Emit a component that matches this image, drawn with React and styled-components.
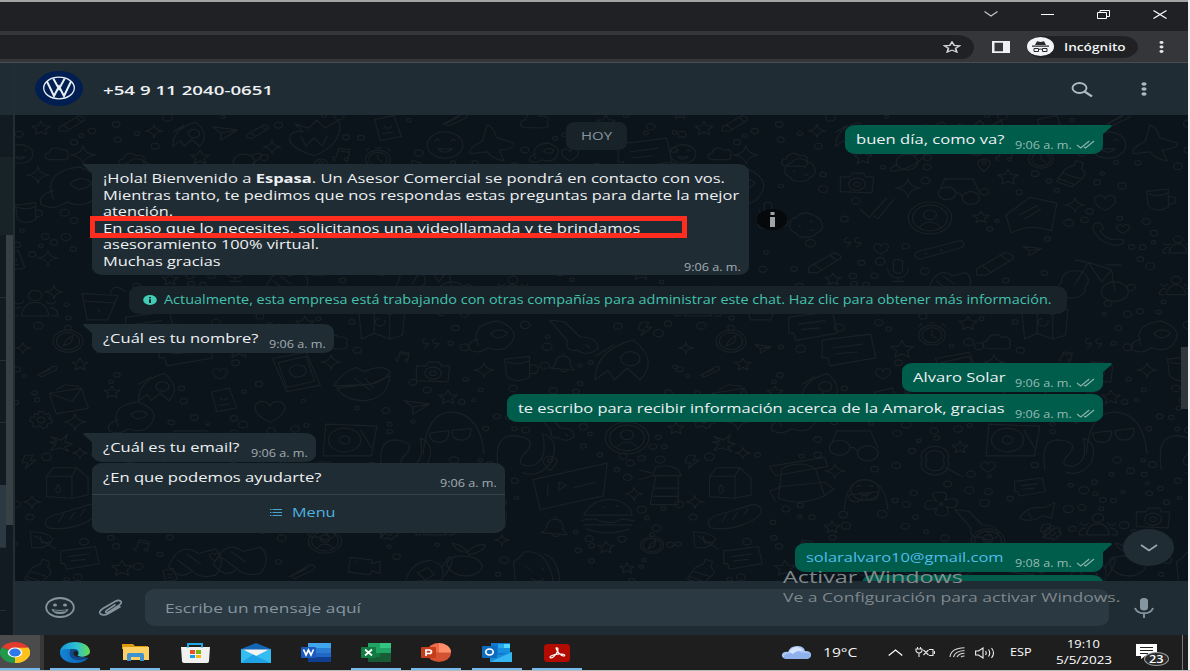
import React, { useLayoutEffect, useRef, useState } from "react";
import styled, { createGlobalStyle } from "styled-components";

const Global = createGlobalStyle`
  * { box-sizing: border-box; }
  html, body { margin: 0; padding: 0; overflow: hidden; background: #f1f1f1; }
  body { font-family: "Open Sans", "Noto Sans", "Liberation Sans", sans-serif; }
`;

/* ---------- text stretched to a measured width ---------- */
const FitBox = styled.span`
  display: inline-block;
  flex: none;
  white-space: nowrap;
  width: ${(p) => p.$w}px;
  font-size: ${(p) => p.$size}px;
  line-height: ${(p) => p.$lh}px;
  height: ${(p) => p.$lh}px;
  color: ${(p) => p.$color};
  font-weight: ${(p) => p.$weight};
`;
const FitInner = styled.span`
  display: inline-block;
  transform-origin: 0 50%;
`;
function Fit({ w, size = 12.8, lh = 16.5, color = "#eef1f3", weight = 400, children }) {
  const ref = useRef(null);
  const [k, setK] = useState(1);
  useLayoutEffect(() => {
    const natural = ref.current.offsetWidth;
    if (natural) setK(w / natural);
  }, [w]);
  return (
    <FitBox $w={w} $size={size} $lh={lh} $color={color} $weight={weight}>
      <FitInner ref={ref} style={{ transform: `scaleX(${k})` }}>{children}</FitInner>
    </FitBox>
  );
}

const Drawing = styled.svg`
  display: block;
  flex: none;
`;
function Icon({ w, h, box = "0 0 24 24", children, ...rest }) {
  return (
    <Drawing width={w} height={h} viewBox={box} preserveAspectRatio="none" fill="none" {...rest}>
      {children}
    </Drawing>
  );
}

/* ---------- wallpaper ---------- */
const shapes = {
  star: "M0-9L2.6-3 9-2.4 4.2 2 5.6 8.6 0 5.2-5.6 8.6-4.2 2-9-2.4-2.6-3Z",
  spark: "M0-10Q1-1 10 0Q1 1 0 10Q-1 1-10 0Q-1-1 0-10Z",
  heart: "M0 8C-12 0-9-8-4-8C-1-8 0-5 0-4C0-5 1-8 4-8C9-8 12 0 0 8Z",
  cloud: "M-6 6C-11 5-10-1-6-1C-6-7 1-8 3-4C7-6 10-2 8 1C10 5 7 7 4 6Z",
  camera: "M-10-5L-4-5-3-8 4-8 5-5 10-5 9 8-10 7ZM5 1A5 5 0 1 1-5 1A5 5 0 1 1 5 1M2 1A2 2 0 1 1-2 1A2 2 0 1 1 2 1",
  rocket: "M-9 8Q-9-5 3-9Q11 0 5 8L1 3-3 8-5 4ZM-9-2L-3-7M5-1A3 3 0 1 1-1-1A3 3 0 1 1 5-1",
  pencil: "M-9 4L5-7Q9-6 9-3L-4 8-9 8ZM-6 2L-2 6M3-5L7-1",
  clip: "M-8 5L5-5Q9-5 7-1L-4 6Q-7 6-5 3L3-2",
  heartBig: "M0 9C-14 3-9-5-4-3L-7-7-2-5 1-9 4-5 9-9C11-3 8 5 0 9M-5-1L-3 4 0 0 3 4 5-1",
  face: "M10 0A10 10 0 1 1-10 0A10 10 0 1 1 10 0M-4 3Q0 8 4 3ZM-6-3Q-4-6-3-3M3-3Q5-6 6-3",
  avatar: "M10 0A10 10 0 1 1-10 0A10 10 0 1 1 10 0M8 0A8 8 0 1 1-8 0A8 8 0 1 1 8 0M3-2A3 3 0 1 1-3-2A3 3 0 1 1 3-2M-5 6Q0-1 5 6",
  starfish: "M-2-10Q0-10 2-3L9 0Q10 3 3 4L5 10Q0 9-2 5L-9 6Q-10 3-4-1Z",
  bubble: "M-10-5L8-8 10 4-7 8-8 4-10 4ZM-6-1L5-3M-5 2L3 1",
  quote: "M-6-5A3 3 0 1 0-4 0Q-4 4-8 6M3-5A3 3 0 1 0 5 0Q5 4 1 6",
  watch: "M8 1A8 8 0 1 1-8 1A8 8 0 1 1 8 1M6 1A6 6 0 1 1-6 1A6 6 0 1 1 6 1M0-3L0 1 3 4M-2-9L2-9M-8-6L-6-9M8-6L6-9",
  compass: "M9 1A9 9 0 1 1-9 1A9 9 0 1 1 9 1M7 1A7 7 0 1 1-7 1A7 7 0 1 1 7 1M3-4L-1 0-3 5 2 2ZM2-10A2 2 0 1 1-2-10A2 2 0 1 1 2-10",
  note: "M-5 6A3 2 0 1 1-5 2L-3-8 7-6 5 7A3 2 0 1 1 5 3M-3-5L6-3",
  planet: "M6 0A6 6 0 1 1-6 0A6 6 0 1 1 6 0M-6 2Q-12 7-7 7Q4 5 10-5Q9-8 4-5",
  pin: "M0 9Q-7 0-6-4Q0-12 6-4Q7 0 0 9M2-3A2 2 0 1 1-2-3A2 2 0 1 1 2-3",
  bottle: "M3-9L7-7 6-3Q9 0 7 3L1 10-7 6-3-2Q0-5 2-5ZM-4 0L5 4M-6 4L2 8",
  glasses: "M-2 2A4 4 0 1 1-10 2A4 4 0 1 1-2 2M9 5A4 4 0 1 1 1 5A4 4 0 1 1 9 5M-2 2Q0 1 1 4M-9-1L-7-7 6-7 9 2",
  mug: "M-8-7L5-9 5 6Q-2 11-7 5ZM5-3Q11-3 9 2Q8 4 5 3M-7-5Q0-2 5-6",
  cookie: "M9 0Q10 4 6 6Q4 10 0 9Q-4 10-6 6Q-10 3-9 0Q-9-5-5-6Q-3-10 1-9Q4-8 6-6Q9-4 9 0M-4 0L-3 2M2-3L4-2M2 4L5 4",
  check: "M-10 1L-5 7 5-8M-3 6L0 8 9-7",
  cap: "M-9 0L0-9 10-6 8 8Q0 4-7 9ZM-4 0L3-5M-2 2L4-3",
  phone: "M-8-8Q-4-10-3-4L-5-2Q-1 5 3 4Q9 3 8 7Q4 11-4 5Q-11-3-8-8",
  mic: "M-3-8Q0-11 3-8L3 1Q0 5-3 1ZM-7-2Q-6 7 0 7Q6 7 7-2M0 7L0 10M-4 10L4 10",
  pill: "M-9 2L8-4Q11-2 8 0L-8 6Q-11 4-9 2M-6 3L-5 3M0 1L1 1",
  plane: "M-9-5L9-2-3 8-3 1ZM-3 1L9-2",
  bike: "M-3 4A4 4 0 1 1-10 2A4 4 0 1 1-3 4M10 6A4 4 0 1 1 2 6A4 4 0 1 1 10 6M-6 3L-2-6 5-3 6 6M-2-6L-6-7M-2-6L2 2 5-3M3-5L8-5",
  people: "M3-5A3 3 0 1 1-3-5A3 3 0 1 1 3-5M-6 7Q-5-1 0-1Q5-1 6 7ZM-5-2A2 2 0 1 1-9-2M9-2A2 2 0 1 1 5-2M-7 7L-10 7Q-10 2-6 2M7 7L10 7Q10 2 6 2",
  hands: "M-9 3Q-5-9 1-3L7-5Q11 0 7 7Q2 9-1 5Q-5 10-9 3M-3-3L2 2M-6 0L-1 5",
  drink: "M-7-5L7-4 3 9-5 9ZM-6-1L6 0M4-5Q5-11 10-6M-1 3L0 5",
  map: "M-9-6L-3-8 3-5 9-8 8 6 3 8-3 5-8 8ZM-3-8L-3 5M3-5L3 8M1-2A2 2 0 1 1-1-3",
  hat: "M-6 5Q-10-7 2-9Q12-4 7 4Q4 9-2 6Q-6 10-10 7Q-11 3-6 1M-1-2Q3-6 6-2Q2 3-1-2",
  bell: "M-9 5Q-5 3-5-3Q-2-9 3-6Q6-2 5 2L8 7ZM-2 7Q1 10 3 7M0-8L1-10",
  guitar: "M-10-9L-4-8 2 0Q9 0 9 6Q5 11 1 7Q-4 8-3 2L-8-6ZM4 4L6 6",
  bolt: "M-4-9L4-9 1-2 7-3-4 9-1 1-7 1Z",
  tablet: "M-8-7L4-10 9 6-3 9ZM-6-5L4-8 7 4-3 7ZM4-1A3 3 0 1 1-2-1A3 3 0 1 1 4-1",
  lips: "M-10 2Q-7-5-2-7L1-5Q7-9 10-5Q8 0 3 1ZM-9 3L3 1 10-3Q9 8 1 9Q-6 9-9 3M-3-2L3 4M1-2L4 3",
  card: "M-7-6L3-9 7 6-4 9ZM2-2A2 2 0 1 1-2-2M-3 4L3 3",
  deck: "M-9-8L10-7 8 8-10 8ZM4 0A6 6 0 1 1-8 0A6 6 0 1 1 4 0M0 0A2 2 0 1 1-4 0A2 2 0 1 1 0 0M4-5L8 4",
  ghost: "M-9 9Q-8-9 0-9Q9-8 10 9M-7 0L-1-1Q-1 4-4 4Q-7 4-7 0M0-1L6-2Q6 3 3 3Q0 3 0-1",
  snake: "M-9 8Q-11-8-4-8Q5-7 0 0Q-4 6 2 6Q8 4 6-9Q12-6 9 4Q5 12-1 9",
  letter: "M-9-4L5-7 8 5-6 8ZM-9-4L1 1 5-7M-6-6L-2-9 4-8",
  leaf: "M-9-8L-8 7Q3 10 7-1Q3-8-9-8M-6-4L9 9M-2-4L-1 3 5 2",
  gear: "M-2-9L2-9 3-6 6-7 8-4 6-2 9 0 8 4 5 4 5 7 1 9-1 6-4 8-7 6-6 3-9 1-8-3-5-3-5-7-2-6ZM3 0A3 3 0 1 1-3 0A3 3 0 1 1 3 0",
  burst: "M-8-7L0-3 5-9 3-1 9 1 3 4 6 9-1 5-8 8-4 1-9-1-3-2Z",
  wave: "M-10-2L10-8 9 4-8 9ZM-6 0L-6 4M-3-1L-1 0-3 2ZM1 1L7-1",
  tower: "M-4-9Q0-11 4-8L5-5-5-5ZM-4-5L-6 9 4 9 4-5M-5 1L4 1M-5 5L4 5M-5-6L-10-8M-10-3L-5-5",
  milk: "M-8-4L-5-9 5-9 10-3 10 7 3 9-8 8ZM-8-4L3-4 3 9M3-4L5-9M-3 1Q-5 5-3 6Q-1 5-3 1",
  pack: "M-6-5Q0-9 5-5L8 7Q0 12-7 8ZM-10-6L8-10 9-6-8-2ZM-7 3L8 1M-6 3L-10 5-8 9M8 1L11 4 8 7",
  bread: "M-9 6Q-12 1-5-1L7-6Q12-4 8 1Q0 8-9 6M-5 3L-3-1M-1 2L1-2M3 0L5-4",
  burger: "M-9-1Q-6-9 1-9Q8-8 9-1ZM-10 2Q-6 0-3 2Q2 4 5 1L10 2M-9 4L9 4M-8 6Q0 10 8 6M-2-5L-1-5M3-6L4-5",
  lens: "M2-2A6 6 0 1 1-9-2A6 6 0 1 1 2-2M0-2A4 4 0 1 1-7-2A4 4 0 1 1 0-2M1 2L9 8",
  flower: "M-2-2Q-8-10 0-9Q5-9 2-3Q10-6 9 0Q8 4 3 2Q6 10 0 9Q-5 8-2 3Q-10 6-9 0Q-8-4-2-2M1 0A1 1 0 1 1-1 0A1 1 0 1 1 1 0",
  fish: "M-10 4Q-5-6 4-4L10-8 8 4 3 2Q-3 8-10 4M-5 0L-3 4",
  cherry: "M-1-2Q-9-3-9 3Q-6 10 1 8Q8 4 2-1ZM0-2Q-2-8-7-9Q-5-4-1-4Q2-9 6-8Q6-5 0-3",
  turtle: "M-8 6Q-6-5 2-6Q9-4 7 5ZM-8 6L-10 8M7-2L10-8Q13-7 8 3M-3 1L1-2 4 2 0 5Z",
  pop: "M-7 10L-8-4Q-5-6-4-9Q6-11 8 10M-3-1L-1 1M3-1L4 1M-1 5Q2 8 4 5M4-8Q10-5 10 8",
  video: "M-9-7L4-5 4-2 9-4 9 6 4 4 3 7-10 5ZM-6-4L-5-3",
};

const doodles = [
  ["star",41,128,.8],["pencil",72,123,1.1],["spark",154,131,.7],["rocket",190,135,1.5],["plane",225,132,1.1],["pencil",258,131,.95],["heartBig",314,138,2.1],["spark",272,147,.7],
  ["note",342,155,.9],["watch",378,158,1.2],["star",200,157,.8],["cloud",57,154,1],["spark",83,155,1],["spark",38,175,.9],["hat",73,188,2.5],["cloud",132,160,1.1],
  ["card",388,128,1.5],["face",445,145,1.4],["starfish",492,143,1.9],["clip",455,119,1.2],["cloud",535,121,1.2],["bubble",645,154,2.1],["hat",545,153,1.2],["star",680,113,.7],["star",606,122,.8],["spark",555,183,1.1],["heart",570,155,.8],
  ["planet",244,162,1.4],["camera",194,183,1.3],["pin",321,165,.8],["star",345,177,.9],["bottle",407,173,1.5],["glasses",297,190,1.7],["cookie",137,170,1.3],["spark",245,188,1],
  ["avatar",267,218,1.7],["cookie",143,225,1.4],["check",215,208,1.4],["spark",412,205,.8],["star",318,217,.7],["cap",367,215,2.1],["heart",442,203,1],["mug",497,200,1.3],["phone",446,234,1.4],["heart",460,229,.6],
  ["people",515,245,1.2],["cloud",564,257,1.3],["star",641,273,.8],["lens",603,255,1.3],["leaf",657,225,1.3],["face",20,154,1],["mug",28,213,1.2],["mic",105,211,1],["spark",48,258,.8],["card",14,261,1.2],
  ["quote",192,242,.9],["heart",218,249,.7],["pencil",162,262,1.4],["mic",235,270,1.2],["pill",277,248,2],["pencil",332,263,1.6],["plane",369,250,.8],["bike",432,277,2.6],["hands",287,281,1.8],["star",170,279,.7],["people",513,286,1.3],
  ["drink",100,303,2],["people",35,304,1.8],["compass",68,340,1.3],["spark",23,348,.6],["spark",54,292,.7],["map",382,324,2],["hat",493,337,1.9],["star",305,323,.8],["watch",269,334,1.3],["bubble",150,326,1.9],["bubble",186,350,2.1],
  ["cloud",334,342,1.2],["quote",433,343,.9],["star",239,349,1],["camera",433,372,1.3],["spark",484,370,.8],["mug",520,369,1.5],["bell",563,363,1.1],["guitar",575,337,2],["rocket",624,361,2.5],["bolt",645,329,.8],["plane",100,348,.7],
  ["tablet",295,373,2.2],["lips",362,382,2.2],["spark",331,362,.8],["note",403,357,.7],["heart",220,374,.7],["card",224,400,1.4],["heart",270,412,1.4],["star",448,397,.8],["plane",417,406,1.1],["deck",350,440,2.1],["ghost",452,433,2.5],
  ["snake",525,453,2.3],["snake",405,455,2],["pin",550,463,.9],["star",80,364,.7],["clip",47,371,1],["letter",70,400,1.8],["star",112,392,.7],["rocket",158,388,1.7],["hat",133,418,1.9],["gear",41,420,1],["spark",75,422,.9],["guitar",557,428,1.5],
  ["avatar",627,438,1.7],["star",676,428,.7],["burst",61,443,1],["spark",80,453,.6],["wave",570,485,2.9],["tower",667,486,2.2],["spark",634,494,.7],["milk",65,483,1.8],["pack",137,480,2.4],["bread",72,516,2.1],["spark",32,502,.7],
  ["burger",608,517,2.1],["bell",555,527,1.2],["glasses",192,444,2],["spark",172,471,.8],["ghost",202,495,1.8],["face",202,490,1.1],["lens",280,464,1.8],["star",297,447,.7],["heart",325,467,.7],["flower",278,504,1.4],
  ["bubble",367,487,1.2],["fish",374,513,1.4],["guitar",315,525,1.8],["gear",389,533,.8],["people",435,525,1.5],["camera",490,518,1.3],["star",169,527,.7],["leaf",43,540,1.1],["bubble",80,558,1.5],["star",122,568,.9],
  ["compass",652,544,1],["star",606,547,.7],["cherry",470,560,2],["turtle",425,571,1.9],["pop",534,569,2],["star",627,568,.6],["hands",195,560,2.3],["hands",240,558,2.3],["heart",215,557,.5],["spark",502,540,.6],["bottle",37,571,1.4],
  ["video",365,566,1.3],["avatar",325,541,1.3],["clip",302,571,1.3],["note",142,546,.8],["bolt",384,531,.8],["card",170,575,.8],["bolt",29,462,.8],
];

const dots = [];
let seed = 7;
const rnd = () => (seed = (seed * 16807) % 2147483647) / 2147483647;
for (let i = 0; i < 2600 && dots.length < 330; i++) {
  const x = 15 + rnd() * 663, y = 115 + rnd() * 466, r = 1.5 + rnd() * 2.2;
  const free = doodles.every(([, a, b, s]) => Math.abs(a - x) > s * 12 + 3 || Math.abs(b - y) > s * 8.5 + 3);
  if (free && dots.every((d) => Math.hypot((d[0] - x) / 1.4, d[1] - y) > 7)) dots.push([x, y, r]);
}

const Wallpaper = styled.svg`
  position: absolute;
  inset: 0;
  width: 100%;
  height: 100%;
`;
function Doodles() {
  return (
    <Wallpaper viewBox="15 115 1173 466" preserveAspectRatio="none" fill="none" stroke="#192127" strokeWidth="1.2" strokeLinejoin="round">
      {[0, 663].map((dx) => (
        <g key={dx} transform={`translate(${dx} 0)`}>
          {doodles.map(([n, x, y, s], i) => (
            <path key={i} d={shapes[n]} transform={`translate(${x} ${y}) scale(${s * 1.28} ${s * 0.94})`} vectorEffect="non-scaling-stroke" />
          ))}
          {dots.map(([x, y, r], i) => <ellipse key={i} cx={x} cy={y} rx={r * 1.35} ry={r} />)}
        </g>
      ))}
    </Wallpaper>
  );
}

/* ---------- frame ---------- */
const Screen = styled.div`
  position: relative;
  width: 1190px;
  height: 671px;
  display: flex;
  flex-direction: column;
  padding-right: 2px;
  background: #f1f1f1;
  border-bottom: 1px solid #b9b9b9;
  overflow: hidden;
`;
const TitleBar = styled.div`
  height: 31px;
  flex: none;
  border-top: 2px solid #a3a3a3;
  background: #202124;
  display: flex;
  justify-content: flex-end;
  align-items: flex-start;
  padding: 6px 21px 0 0;
  gap: 42.5px;
`;
const WinButton = styled.div`
  width: 14px;
  height: 12px;
  display: flex;
  align-items: center;
  justify-content: center;
`;
const ToolBar = styled.div`
  height: 32px;
  flex: none;
  display: flex;
  align-items: center;
  background: #35363a;
  border-bottom: 1px solid #4b4c50;
`;
const Omnibox = styled.div`
  width: 974px;
  height: 24px;
  background: #202124;
  border-radius: 0 17px 12px 0 / 0 12px 12px 0;
  display: flex;
  justify-content: flex-end;
  align-items: center;
  padding-right: 13px;
  margin-right: 18px;
`;
const Incognito = styled.div`
  width: 111px;
  height: 22px;
  margin: 0 21px 0 17px;
  border-radius: 16px / 11px;
  background: #202124;
  display: flex;
  align-items: center;
  gap: 10px;
`;
const Main = styled.div`
  height: 572px;
  flex: none;
  display: flex;
`;
const Sidebar = styled.div`
  width: 15px;
  flex: none;
  display: flex;
  background: #111b21;
  border-right: 2px solid #222d34;
`;
const SideList = styled.div`
  width: 6px;
`;
const SideCell = styled.div`
  height: ${(p) => p.$h}px;
  background: ${(p) => p.$bg || "#111b21"};
  border-bottom: 1px solid ${(p) => p.$line || "#222d34"};
`;
const SideTrack = styled.div`
  width: 7px;
`;
const Block = styled.div`
  height: ${(p) => p.$h}px;
  background: ${(p) => p.$bg};
`;
const Conversation = styled.div`
  flex: 1;
  min-width: 0;
  display: flex;
  flex-direction: column;
`;
const Header = styled.div`
  height: 52px;
  flex: none;
  display: flex;
  align-items: center;
  padding: 0 41px 2px 20px;
  background: #202c33;
`;
const Push = styled.div`
  flex: 1;
`;
const HeaderIcons = styled.div`
  display: flex;
  align-items: center;
  gap: 48px;
  padding-top: 2px;
`;
const Name = styled.div`
  margin-left: 20px;
  padding-top: 1px;
`;

/* ---------- messages ---------- */
const Chat = styled.div`
  position: relative;
  height: 466px;
  flex: none;
  background: #0b141a;
  overflow: hidden;
`;
const Messages = styled.div`
  position: relative;
  display: flex;
  flex-direction: column;
  padding: 7px 85px 0 77px;
`;
const FirstRow = styled.div`
  display: grid;
  height: 32px;
  & > * { grid-area: 1 / 1; }
`;
const DayBadge = styled.div`
  width: 61px;
  height: 28px;
  margin-left: 474px;
  border-radius: 9px / 7px;
  background: #182229;
  display: flex;
  align-items: center;
  justify-content: center;
`;
const Row = styled.div`
  display: flex;
  align-items: ${(p) => (p.$mid ? "center" : "flex-start")};
  justify-content: ${(p) => (p.$out ? "flex-end" : "flex-start")};
  margin-top: ${(p) => p.$gap}px;
`;
const Bubble = styled.div`
  position: relative;
  width: ${(p) => p.$w}px;
  height: ${(p) => p.$h}px;
  background: ${(p) => (p.$out ? "#005c4b" : "#202c33")};
  border-radius: 11px / 8px;
  ${(p) => p.$tail && (p.$out ? "border-top-right-radius: 0;" : "border-top-left-radius: 0;")}
  padding: 0 8px 0 11px;
  &::before {
    content: "";
    display: ${(p) => (p.$tail ? "block" : "none")};
    position: absolute;
    top: 0;
    ${(p) => (p.$out ? "right: -9px;" : "left: -9px;")}
    width: 10px;
    height: 10px;
    background: inherit;
    clip-path: ${(p) => (p.$out ? "polygon(0 0, 90% 0, 100% 12%, 0 100%)" : "polygon(10% 0, 100% 0, 100% 100%, 0 12%)")};
  }
`;
const Line = styled.div`
  display: flex;
  justify-content: space-between;
  height: 29px;
  padding-top: 6px;
`;
const Stamp = styled.div`
  display: flex;
  align-items: center;
  gap: 4px;
  height: 14px;
  margin-top: 6.5px;
`;
const LongText = styled.div`
  display: flex;
  flex-direction: column;
  padding-top: 6px;
`;
const Corner = styled.div`
  position: absolute;
  right: 8px;
  bottom: 1px;
  height: 14px;
  display: flex;
`;
const Highlight = styled.div`
  position: absolute;
  left: -2px;
  top: 52px;
  width: 597px;
  height: 22px;
  border: 5px solid #ff2d1d;
`;
const InfoDot = styled.div`
  width: 30px;
  height: 21px;
  margin-left: 8px;
  border-radius: 50%;
  background: #05090c;
  display: flex;
  align-items: center;
  justify-content: center;
`;
const Notice = styled.div`
  width: 938px;
  height: 28px;
  margin: 11px 0 0 37px;
  padding: 0 0 1px 14px;
  border-radius: 11px / 8px;
  background: #182229;
  display: flex;
  align-items: center;
  gap: 7px;
`;
const MenuButton = styled.div`
  margin: 2px -8px 0 -11px;
  height: 38px;
  border-top: 1px solid #36434b;
  padding: 0 0 2px 178px;
  display: flex;
  align-items: center;
  gap: 10px;
`;
const ScrollDown = styled.div`
  position: absolute;
  right: 14px;
  bottom: 15px;
  width: 51px;
  height: 37px;
  border-radius: 50%;
  background: #202c33;
  display: flex;
  align-items: center;
  justify-content: center;
`;
const ScrollThumb = styled.div`
  position: absolute;
  right: 0;
  top: 232px;
  width: 7px;
  height: 62px;
  background: #2f373c;
`;

/* ---------- composer and taskbar ---------- */
const Composer = styled.div`
  height: 54px;
  flex: none;
  display: flex;
  align-items: center;
  background: #202c33;
  padding: 0 33px 1px 30px;
`;
const Field = styled.div`
  width: 964px;
  height: 37px;
  margin: 0 25px 0 21px;
  border-radius: 11px / 8px;
  background: #2a3942;
  display: flex;
  align-items: center;
  padding: 2px 0 0 20px;
`;
const Watermark = styled.div`
  position: absolute;
  left: 783px;
  top: 566px;
  display: flex;
  flex-direction: column;
  opacity: 0.85;
`;
const TaskBar = styled.div`
  height: 35px;
  flex: none;
  display: flex;
  background: #1e1e1e;
  overflow: hidden;
`;
const Apps = styled.div`
  display: flex;
  gap: 10.2px;
  margin-left: -10px;
`;
const TaskButton = styled.div`
  width: 50px;
  height: 35px;
  display: flex;
  align-items: center;
  justify-content: center;
  padding-top: 2px;
  background: ${(p) => (p.$active ? "#4b4b4b" : "transparent")};
  border-bottom: 2px solid ${(p) => (p.$open ? "#76b9ed" : "transparent")};
  box-shadow: ${(p) => (p.$active ? "4px 0 0 #383838" : "none")};
`;
const Tray = styled.div`
  flex: 1;
  display: flex;
  align-items: center;
  justify-content: flex-end;
`;
const Gap = styled.div`
  flex: none;
  width: ${(p) => p.$w}px;
`;
const Clock = styled.div`
  width: 57px;
  display: flex;
  flex-direction: column;
  align-items: center;
  padding-bottom: 2px;
`;
const Notes = styled.div`
  position: relative;
  width: 33px;
  height: 22px;
  margin-top: 4px;
`;
const Count = styled.div`
  position: absolute;
  right: 0;
  bottom: 0;
  width: 25px;
  height: 14px;
  border: 1px solid #9b9b9b;
  border-radius: 12px / 7px;
  background: #2b2b2b;
  display: flex;
  align-items: center;
  justify-content: center;
`;
const DesktopEdge = styled.div`
  width: 1px;
  height: 35px;
  background: #777;
`;

const Time = ({ t = "9:06 a. m.", out, w = 57 }) => (
  <Fit w={w} size={10.2} lh={14} color={out ? "#93bbb3" : "#a3adb3"}>{t}</Fit>
);
const Checks = () => (
  <Icon w={19} h={9} box="0 0 20 9" stroke="#8db5ad" strokeWidth="1.2">
    <path d="M1 5L5 8 14 1M8.500 7L10 8 19 1" />
  </Icon>
);

function Outgoing({ w, h = 29, gap, tail, text, textW, color, time }) {
  return (
    <Row $out $gap={gap}>
      <Bubble $out $w={w} $h={h} $tail={tail}>
        <Line>
          <Fit w={textW} color={color}>{text}</Fit>
          <Stamp><Time out t={time} /><Checks /></Stamp>
        </Line>
      </Bubble>
    </Row>
  );
}
function Incoming({ w, gap, text, textW }) {
  return (
    <Row $gap={gap}>
      <Bubble $w={w} $h={29} $tail>
        <Line>
          <Fit w={textW}>{text}</Fit>
          <Stamp><Time /></Stamp>
        </Line>
      </Bubble>
    </Row>
  );
}

/* ---------- application icons ---------- */
const OfficeTile = ({ color, mark }) => (
  <>
    <rect x="0" y="4" width="15" height="11" rx="1" fill={color} />
    <path d={mark} stroke="#fff" strokeWidth="1.7" />
  </>
);
const ChromeIcon = () => (
  <Icon w={30} h={21} box="0 0 24 24">
    <path d="M12 12L1.600 6A12 12 0 0 1 22.400 6Z" fill="#e33b2e" />
    <path d="M12 12L22.400 6A12 12 0 0 1 12 24Z" fill="#fcc31e" />
    <path d="M12 12L12 24A12 12 0 0 1 1.600 6Z" fill="#22994a" />
    <path d="M12 6.500H22.700A12 12 0 0 1 12 24L17 15Z" fill="#fcc31e" />
    <circle cx="12" cy="12" r="5.800" fill="#fff" />
    <circle cx="12" cy="12" r="4.600" fill="#2f78ea" />
  </Icon>
);
const EdgeIcon = () => (
  <Icon w={30} h={21} box="0 0 24 24">
    <defs>
      <linearGradient id="edgeTop" x1="0" x2="1"><stop offset="0" stopColor="#1797d8" /><stop offset=".55" stopColor="#2cc1d5" /><stop offset="1" stopColor="#66dc4c" /></linearGradient>
      <linearGradient id="edgeLow" x1="0" x2="1"><stop offset="0" stopColor="#1484d6" /><stop offset="1" stopColor="#0b5fb0" /></linearGradient>
    </defs>
    <path d="M0 12C0 5 5 0 12 0C19 0 24 5 24 11C24 16 17 18 14 16C16 13 14 8 9 8C5 8 1 10 0 12Z" fill="url(#edgeTop)" />
    <path d="M0 12C0 9 5 7 9 8.500C6 14 9 20 15 20C19 20 21 18 22.500 18C20 23 16 24 12 24C5 24 0 19 0 12Z" fill="url(#edgeLow)" />
    <path d="M9 8.500C13 7 16 10 14.500 14C13 16 16 18 21 17C18 22 9 21 8 15C7.500 12 8 10 9 8.500Z" fill="#114a8b" />
    <path d="M11 11C13 9 15.500 11 14 14.500C13 16 15 17 17 17C12 18 10 14 11 11Z" fill="#1e1e1e" />
  </Icon>
);
const FolderIcon = () => (
  <Icon w={27} h={17} box="0 0 27 17">
    <path d="M0 0H11L13 2H26V5H0Z" fill="#dc9b0d" />
    <rect x="1" y="3" width="26" height="13" fill="#fbd165" />
    <path d="M5 17V11Q5 9 7 9H20Q22 9 22 11V17H18V13H9V17Z" fill="#3f92d2" />
  </Icon>
);
const StoreIcon = () => (
  <Icon w={29} h={20} box="0 0 29 20">
    <path d="M0 4H29L28 18Q28 20 25 20H4Q1 20 1 18Z" fill="#f1f1f1" />
    <path d="M7 4.500V1H21V4.500" stroke="#20a6e4" strokeWidth="2" />
    <path d="M9 7H14V11H9Z" fill="#e9512b" /><path d="M15 7H20V11H15Z" fill="#7db70c" />
    <path d="M9 12H14V15H9Z" fill="#18a0e5" /><path d="M15 12H20V15H15Z" fill="#fbb70b" />
  </Icon>
);
const MailIcon = () => (
  <Icon w={30} h={20} box="0 0 30 20">
    <path d="M0 6L15 0 30 6V20H0Z" fill="#1266b5" />
    <path d="M0 6L3 7 15 12 27 7 30 6V20H0Z" fill="#35bdf2" />
    <path d="M2 6.500H28L15 13Z" fill="#f3f3f3" />
    <path d="M30 20L12 11.500 0 20Z" fill="#1fa3e6" />
  </Icon>
);
const WordIcon = () => (
  <Icon w={30} h={19} box="0 0 30 19">
    <rect x="7" width="23" height="19" rx="1" fill="#2167c5" /><path d="M7 0H30V5H7Z" fill="#41a5ee" /><path d="M7 5H30V10H7Z" fill="#2b7cd3" /><path d="M7 14H30V19H7Z" fill="#103f91" />
    <OfficeTile color="#185abd" mark="M2.500 6.500L5 12 7.500 7 10 12 12.500 6.500" />
  </Icon>
);
const ExcelIcon = () => (
  <Icon w={30} h={19} box="0 0 30 19">
    <rect x="7" width="23" height="19" rx="1" fill="#185c37" /><path d="M7 0H19V10H7Z" fill="#21a366" /><path d="M19 0H30V5H19Z" fill="#33c481" /><path d="M19 5H30V10H19Z" fill="#21a366" /><path d="M7 10H19V14H7Z" fill="#107c41" />
    <OfficeTile color="#107c41" mark="M4 6.500L11 12.500M11 6.500L4 12.500" />
  </Icon>
);
const PowerIcon = () => (
  <Icon w={30} h={19} box="0 0 30 19">
    <ellipse cx="18" cy="9.500" rx="12" ry="9.500" fill="#d35230" /><path d="M18 0A12 9.500 0 0 1 30 9.500H18Z" fill="#ff8f6b" /><path d="M18 0A12 9.500 0 0 0 6 9.500H18Z" fill="#ed6c47" />
    <OfficeTile color="#c43e1c" mark="M5 13V7H8Q10.500 7 10.500 8.700T8 10.500H5" />
  </Icon>
);
const OutlookIcon = () => (
  <Icon w={30} h={19} box="0 0 30 19">
    <path d="M9 0H28V12H9Z" fill="#0f78d4" /><path d="M16 1H22V5H16Z" fill="#28a8ea" /><path d="M22 1H28V5H22Z" fill="#50d9ff" /><path d="M16 5H28V10H16Z" fill="#1490df" />
    <path d="M8 12H19L30 9V19H8Z" fill="#1a8cdc" /><path d="M8 19L30 9V19Z" fill="#35b8f1" />
    <rect y="3" width="15" height="12" rx="1" fill="#0f6cbd" /><ellipse cx="7.500" cy="9" rx="3.700" ry="3" stroke="#fff" strokeWidth="1.700" />
  </Icon>
);
const AcrobatIcon = () => (
  <Icon w={26} h={18} box="0 0 26 18">
    <rect width="26" height="18" rx="3.500" fill="#b30b00" />
    <path d="M12 4Q15 3 13.500 7.500Q10 14 6.500 14Q5 13 8 11.500Q14 9 20 10.500Q22 12 19 12Q14 10 12 4Z" stroke="#fff" strokeWidth="1.200" />
  </Icon>
);

const apps = [
  [ChromeIcon, true, true], [EdgeIcon, true], [FolderIcon, true], [StoreIcon], [MailIcon],
  [WordIcon], [ExcelIcon, true], [PowerIcon, true], [OutlookIcon, true], [AcrobatIcon, true],
];

export default function App() {
  return (
    <Screen>
      <Global />
      <TitleBar>
        <WinButton><Icon w={14} h={6} box="0 0 14 6" stroke="#c8c9cb" strokeWidth="1.1"><path d="M.5 .5L7 5 13.500 .5" /></Icon></WinButton>
        <WinButton><Icon w={13} h={1} box="0 0 13 1"><path d="M0 0H13V1H0Z" fill="#fff" /></Icon></WinButton>
        <WinButton><Icon w={13} h={9} box="0 0 13 9" stroke="#fff" strokeWidth="1"><path d="M.5 2.500H9.500V8.500H.5ZM3 2.500V.5H12.500V6.500H9.500" /></Icon></WinButton>
        <WinButton><Icon w={14} h={9} box="0 0 14 9" stroke="#fff" strokeWidth="1.200"><path d="M.5 .5L13.500 8.500M13.500 .5L.5 8.500" /></Icon></WinButton>
      </TitleBar>
      <ToolBar>
        <Omnibox>
          <Icon w={18} h={12} box="-10 -10 20 19" stroke="#d5d6d8" strokeWidth="1.900"><path d="M0-8.500L2.500-3 8.500-2.300 4 1.500 5.300 7.500 0 4.400-5.300 7.500-4 1.500-8.500-2.300-2.500-3Z" /></Icon>
        </Omnibox>
        <Icon w={18} h={12} box="0 0 18 12"><path d="M0 0H18V12H0ZM2.500 1.700V10.300H11V1.700Z" fill="#eef0f2" fillRule="evenodd" /></Icon>
        <Incognito>
          <Icon w={27} h={19} box="0 0 27 19">
            <ellipse cx="13.500" cy="9.500" rx="13.500" ry="9.500" fill="#f1f3f4" />
            <path d="M5 9.800H22V8.600H5ZM8 7.900L10 4.300 13.500 4.900 17 4.300 19 7.900Z" fill="#28292c" />
            <path d="M7 11.500H11.500V14.500H7ZM15.500 11.500H20V14.500H15.500ZM11.500 12.500Q13.500 11.500 15.500 12.500" stroke="#28292c" strokeWidth="1" />
          </Icon>
          <Fit w={62} size={11} lh={17} color="#f1f3f4" weight={600}>Incógnito</Fit>
        </Incognito>
        <Icon w={5} h={12} box="0 0 5 12"><g fill="#e4e5e7"><ellipse cx="2.500" cy="1.500" rx="2" ry="1.400" /><ellipse cx="2.500" cy="6" rx="2" ry="1.400" /><ellipse cx="2.500" cy="10.500" rx="2" ry="1.400" /></g></Icon>
      </ToolBar>

      <Main>
        <Sidebar>
          <SideList>
            <SideCell $h={52} $bg="#202c33" $line="#202c33" />
            <SideCell $h={42} $line="#111b21" />
            <SideCell $h={78} $bg="#182328" $line="#182328" />
            <SideCell $h={63} />
            <SideCell $h={63} />
            <SideCell $h={62} />
            <SideCell $h={62} $line="#111b21" />
            <SideCell $h={63} $bg="#2a3942" />
            <SideCell $h={63} />
          </SideList>
          <SideTrack>
            <Block $h={52} $bg="#202c33" />
            <Block $h={42} $bg="#111b21" />
            <Block $h={78} $bg="#182328" />
            <Block $h={290} $bg="#374045" />
          </SideTrack>
        </Sidebar>
        <Conversation>
          <Header>
            <Icon w={48} h={35} box="0 0 48 35">
              <ellipse cx="24" cy="17.500" rx="24" ry="17.500" fill="#001e50" />
              <ellipse cx="24" cy="17" rx="15.300" ry="10.800" stroke="#e8eef6" strokeWidth="1.300" />
              <path d="M18.300 7.500L24 18 29.700 7.500M12 10.500L19 25 24 15.500 29 25 36 10.500" stroke="#e8eef6" strokeWidth="2" />
            </Icon>
            <Name><Fit w={170} size={13.2} lh={18} weight={600}>+54 9 11 2040-0651</Fit></Name>
            <Push />
            <HeaderIcons>
              <Icon w={22} h={15} box="0 0 22 15" stroke="#aebac1"><ellipse cx="8.500" cy="6" rx="7" ry="5" strokeWidth="1.900" /><path d="M13.500 9.500L21 14.500" strokeWidth="2.200" /></Icon>
              <Icon w={6} h={14} box="0 0 6 14"><g fill="#aebac1"><ellipse cx="3" cy="2" rx="2.600" ry="1.700" /><ellipse cx="3" cy="7" rx="2.600" ry="1.700" /><ellipse cx="3" cy="12" rx="2.600" ry="1.700" /></g></Icon>
            </HeaderIcons>
          </Header>

          <Chat>
            <Doodles />
            <Messages>
              <FirstRow>
                <DayBadge><Fit w={31} size={11.6} lh={16} color="#8696a0">HOY</Fit></DayBadge>
                <Outgoing w={258} gap={3} tail text="buen día, como va?" textW={149} />
              </FirstRow>

              <Row $gap={10} $mid>
                <Bubble $w={657} $h={111} $tail>
                  <LongText>
                    <Fit w={622}>¡Hola! Bienvenido a <b>Espasa</b>. Un Asesor Comercial se pondrá en contacto con vos.</Fit>
                    <Fit w={636}>Mientras tanto, te pedimos que nos respondas estas preguntas para darte la mejor</Fit>
                    <Fit w={70}>atención.</Fit>
                    <Fit w={537}>En caso que lo necesites, solicitanos una videollamada y te brindamos</Fit>
                    <Fit w={216}>asesoramiento 100% virtual.</Fit>
                    <Fit w={118}>Muchas gracias</Fit>
                  </LongText>
                  <Corner><Time /></Corner>
                  <Highlight />
                </Bubble>
                <InfoDot>
                  <Icon w={5} h={15} box="0 0 5 15"><path d="M.5 0H4.500V3H.5ZM0 5H5V15H0Z" fill="#a0a2a3" /></Icon>
                </InfoDot>
              </Row>

              <Notice>
                <Icon w={14} h={10} box="0 0 14 10"><ellipse cx="7" cy="5" rx="6.800" ry="4.900" fill="#3fcdb5" /><path d="M6 2H8V3.200H6ZM6 4.200H8V8H6Z" fill="#182229" /></Icon>
                <Fit w={887} size={11.800} color="#43c3ad">Actualmente, esta empresa está trabajando con otras compañías para administrar este chat. Haz clic para obtener más información.</Fit>
              </Notice>

              <Incoming w={242} gap={10} text="¿Cuál es tu nombre?" textW={156} />
              <Outgoing w={201} gap={10} tail text="Alvaro Solar" textW={92} />
              <Outgoing w={596} h={28} gap={2} text="te escribo para recibir información acerca de la Amarok, gracias" textW={487} />
              <Incoming w={224} gap={11} text="¿Cuál es tu email?" textW={137} />
              <Row $gap={1}>
                <Bubble $w={413} $h={69.5}>
                  <Line>
                    <Fit w={218}>¿En que podemos ayudarte?</Fit>
                    <Stamp><Time /></Stamp>
                  </Line>
                  <MenuButton>
                    <Icon w={12} h={7} box="0 0 12 7"><path d="M0 0H1.500V1H0ZM2.500 0H12V1H2.500ZM0 3H1.500V4H0ZM2.500 3H12V4H2.500ZM0 6H1.500V7H0ZM2.500 6H12V7H2.500Z" fill="#46a5cd" /></Icon>
                    <Fit w={43} color="#4fb3e0">Menu</Fit>
                  </MenuButton>
                </Bubble>
              </Row>
              <Outgoing w={308} gap={10.5} tail text="solaralvaro10@gmail.com" textW={198} color="#53bdeb" time="9:08 a. m." />
              <Row $out $gap={2.5}><Bubble $out $w={241} $h={28} /></Row>
            </Messages>
            <ScrollDown><Icon w={18} h={8} box="0 0 18 8" stroke="#99a6ae" strokeWidth="1.800"><path d="M1 1L9 6.500 17 1" /></Icon></ScrollDown>
            <ScrollThumb />
          </Chat>

          <Composer>
            <Icon w={30} h={21} box="0 0 30 21" stroke="#8696a0">
              <ellipse cx="15" cy="10.500" rx="13.800" ry="9.500" strokeWidth="1.800" />
              <ellipse cx="10" cy="8" rx="2" ry="1.500" fill="#8696a0" stroke="none" /><ellipse cx="20" cy="8" rx="2" ry="1.500" fill="#8696a0" stroke="none" />
              <path d="M6.500 12Q15 14 23.500 12Q22 17 15 17T6.500 12Z" fill="#8696a0" stroke="none" /><path d="M9 13.800Q15 15 21 13.800" stroke="#202c33" strokeWidth="1" />
            </Icon>
            <Gap $w={23} />
            <Icon w={26} h={17} box="0 0 26 17" stroke="#8696a0" strokeWidth="1.600">
              <path d="M17.500 5.500L8.500 11.500Q6.500 13.500 9 13.500Q10 13.500 11.500 12.500L21.500 6Q24.500 3.500 22.500 2Q20.500 .5 17 2.500L5 9.500Q0 13 2.500 15Q5.500 17.200 10.500 14.500L22.500 7.500" />
            </Icon>
            <Field><Fit w={196} size={13.500} lh={19} color="#8696a0">Escribe un mensaje aquí</Fit></Field>
            <Icon w={20} h={20} box="0 0 20 20">
              <rect x="6" y="0" width="8" height="12.500" rx="4" ry="3" fill="#8696a0" />
              <path d="M1 10Q3 15.300 10 15.300T19 10M10 15V20" stroke="#8696a0" strokeWidth="1.900" />
            </Icon>
          </Composer>
        </Conversation>
      </Main>

      <TaskBar>
        <Apps>
          {apps.map(([Pic, open, active], i) => (
            <TaskButton key={i} $open={open} $active={active}><Pic /></TaskButton>
          ))}
        </Apps>
        <Tray>
          <Icon w={31} h={15} box="0 0 31 15"><path d="M5 14Q0 13 1 9Q3 6 7 7Q9 1 16 1Q23 1 24 6Q31 6 30 11Q29 14 24 14Z" fill="#a8c6f5" /><path d="M3 13Q2 9 8 9Q11 4 17 6Q21 9 29 8Q31 14 24 14H5Z" fill="#8fb1ec" /><path d="M8 7Q11 2 16 2Q21 3 22 6Q16 5 12 9Z" fill="#d4e4fc" /></Icon>
          <Gap $w={11} />
          <Fit w={35} size={12.500} lh={17.5} color="#f2f2f2">19°C</Fit>
          <Gap $w={30} />
          <Icon w={15} h={7} box="0 0 15 7" stroke="#fff" strokeWidth="1.200"><path d="M.7 6.500L7.500 1 14.300 6.500" /></Icon>
          <Gap $w={12} />
          <Icon w={20} h={11} box="0 0 20 11" stroke="#e8e8e8" strokeWidth="1.100"><path d="M1 2H7V4Q6 6 4 6T1 4ZM2.500 0V2M5.500 0V2M4 6V10M8.500 3L13.500 8M13.500 3L8.500 8M14 2.500H18V8.500H14M19.500 4V7" /></Icon>
          <Gap $w={14} />
          <Icon w={16} h={11} box="0 0 16 11" stroke="#d8d8d8" strokeWidth="1.100"><path d="M1 10Q2 1 15.500 .7M4.500 10Q6 4 15.500 3.500M8 10Q10 6.500 15.500 6.300M12 10Q13 9 15.500 9" /></Icon>
          <Gap $w={10} />
          <Icon w={21} h={12} box="0 0 21 12" stroke="#f0f0f0" strokeWidth="1.100"><path d="M.6 4H3.500L8 1V11L3.500 8H.6ZM10.500 4Q12 6 10.500 8M13.500 2.500Q16 6 13.500 9.500M16.500 1Q20.500 6 16.500 11" /></Icon>
          <Gap $w={14} />
          <Fit w={22} size={11.500} color="#fff">ESP</Fit>
          <Gap $w={23} />
          <Clock>
            <Fit w={33} size={11.3} lh={15.500} color="#fff">19:10</Fit>
            <Fit w={56} size={11.3} lh={15.500} color="#fff">5/5/2023</Fit>
          </Clock>
          <Gap $w={24} />
          <Notes>
            <Icon w={21} h={15} box="0 0 21 15"><path d="M0 0H21V12H9L5 15V12H0Z" fill="#fff" /><path d="M4 3.500H17M4 6.500H17M4 9.500H12" stroke="#222" strokeWidth="1" /></Icon>
            <Count><Fit w={15} size={11} lh={13} color="#fff" weight={600}>23</Fit></Count>
          </Notes>
          <Gap $w={13} />
          <DesktopEdge />
          <Gap $w={5} />
        </Tray>
      </TaskBar>

      <Watermark>
        <Fit w={180} size={17} lh={22.5} color="#969c9f">Activar Windows</Fit>
        <Fit w={338} size={13} lh={17} color="#90969a">Ve a Configuración para activar Windows.</Fit>
      </Watermark>
    </Screen>
  );
}
